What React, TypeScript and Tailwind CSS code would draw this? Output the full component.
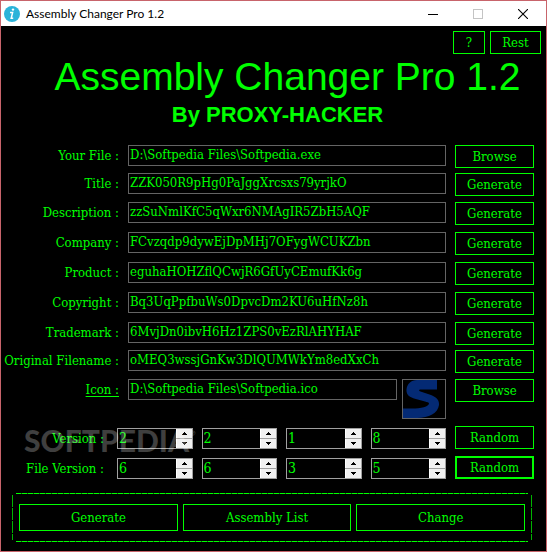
import React, { useState } from "react";

interface FieldRow {
  id: string;
  label: string;
  value: string;
  action: string;
  spacing: string;
}

const rows: FieldRow[] = [
  { id: "file", label: "Your File :", value: "D:\\Softpedia Files\\Softpedia.exe", action: "Browse", spacing: "" },
  { id: "title", label: "Title :", value: "ZZK050R9pHg0PaJggXrcsxs79yrjkO", action: "Generate", spacing: "mt-[5px]" },
  { id: "description", label: "Description :", value: "zzSuNmlKfC5qWxr6NMAgIR5ZbH5AQF", action: "Generate", spacing: "mt-[6px]" },
  { id: "company", label: "Company :", value: "FCvzqdp9dywEjDpMHj7OFygWCUKZbn", action: "Generate", spacing: "mt-[7px]" },
  { id: "product", label: "Product :", value: "eguhaHOHZflQCwjR6GfUyCEmufKk6g", action: "Generate", spacing: "mt-[7px]" },
  { id: "copyright", label: "Copyright :", value: "Bq3UqPpfbuWs0DpvcDm2KU6uHfNz8h", action: "Generate", spacing: "mt-[7px]" },
  { id: "trademark", label: "Trademark :", value: "6MvjDn0ibvH6Hz1ZPS0vEzRlAHYHAF", action: "Generate", spacing: "mt-[7px]" },
  { id: "original", label: "Original Filename :", value: "oMEQ3wssjGnKw3DlQUMWkYm8edXxCh", action: "Generate", spacing: "mt-[5px]" },
];

interface ButtonProps {
  children: React.ReactNode;
  className: string;
}

const GreenButton: React.FC<ButtonProps> = ({ children, className }) => (
  <button
    type="button"
    className={`flex items-center justify-center border-[#00ff00] bg-black hover:bg-[#003300] ${className}`}
  >
    {children}
  </button>
);

interface SpinnerProps {
  label: string;
  initial: number;
}

const Spinner: React.FC<SpinnerProps> = ({ label, initial }) => {
  const [value, setValue] = useState(initial);

  return (
    <div className="flex h-[21px] min-w-0 flex-1 border border-[#a0a0a0]">
      <input
        aria-label={label}
        value={value}
        onChange={(e) => setValue(Number(e.target.value) || 0)}
        className="h-[17px] w-full min-w-0 flex-1 bg-transparent pl-px text-sm leading-4 outline-none"
      />
      <div className="flex w-4 flex-none flex-col gap-px bg-[#a0a0a0]">
        <button
          type="button"
          aria-label={`${label} up`}
          onClick={() => setValue(value + 1)}
          className="flex flex-1 items-center justify-center border-l border-white bg-[#f0f0f0]"
        >
          <svg width="5" height="3" viewBox="0 0 5 3" shapeRendering="crispEdges">
            <path d="M2 0h1v1h1v1h1v1H0V2h1V1h1z" fill="#000" />
          </svg>
        </button>
        <button
          type="button"
          aria-label={`${label} down`}
          onClick={() => setValue(Math.max(0, value - 1))}
          className="flex flex-1 items-center justify-center border-l border-white bg-[#f0f0f0]"
        >
          <svg width="5" height="3" viewBox="0 0 5 3" shapeRendering="crispEdges">
            <path d="M0 0h5v1H4v1H3v1H2V2H1V1H0z" fill="#000" />
          </svg>
        </button>
      </div>
    </div>
  );
};

const App: React.FC = () => {
  return (
    <div className="flex min-h-screen flex-col border border-[#c8646b] bg-black font-['DejaVu_Serif_Condensed','DejaVu_Serif',serif] text-[13px] leading-4 text-[#00ff00]">
      {/* Title bar */}
      <header className="flex h-[25px] items-center bg-white pl-[3px] font-['Lato',sans-serif] text-xs text-black">
        <svg width="16" height="16" viewBox="0 0 16 16">
          <circle cx="8" cy="8" r="8" fill="#2bb3d9" />
          <circle cx="9" cy="3.6" r="1.2" fill="#fff" />
          <path d="M6 6.6h2.6L7.2 12.3h2" fill="none" stroke="#fff" strokeWidth="1.5" />
        </svg>
        <span className="ml-[6px] flex-1">Assembly Changer Pro 1.2</span>
        <button type="button" aria-label="Minimize" className="flex h-full w-[45px] items-center justify-center">
          <svg width="10" height="10" viewBox="0 0 10 10" shapeRendering="crispEdges">
            <path d="M0 5h10v1H0z" fill="#000" />
          </svg>
        </button>
        <button type="button" aria-label="Maximize" disabled className="flex h-full w-[45px] items-center justify-center">
          <svg width="10" height="10" viewBox="0 0 10 10" shapeRendering="crispEdges">
            <rect x="0.5" y="0.5" width="9" height="9" fill="none" stroke="#c4c4c4" />
          </svg>
        </button>
        <button type="button" aria-label="Close" className="flex h-full w-[46px] items-center justify-center">
          <svg width="10" height="10" viewBox="0 0 10 10">
            <path d="M0 0l10 10M10 0L0 10" stroke="#000" strokeWidth="1.1" />
          </svg>
        </button>
      </header>

      {/* Help and reset */}
      <div className="flex justify-end gap-[5px] pt-[5px] pr-[5px]">
        <GreenButton className="h-[23px] w-8 border">?</GreenButton>
        <GreenButton className="h-[23px] w-[51px] border">Rest</GreenButton>
      </div>

      {/* Heading */}
      <div className="pl-[28px] text-center font-['Liberation_Sans',sans-serif]">
        <h1 className="text-[39px] leading-[46px]">Assembly Changer Pro 1.2</h1>
      </div>
      <p className="pl-[8px] text-center font-['Liberation_Sans',sans-serif] text-[22px] leading-[30px] font-bold">
        By PROXY-HACKER
      </p>

      <form className="flex flex-col pt-[15px]">
        {rows.map((row) => (
          <div key={row.id} className={`flex items-start gap-[9px] pr-3 ${row.spacing}`}>
            <label htmlFor={row.id} className="w-[118px] flex-none text-right leading-[21px] whitespace-nowrap">
              {row.label}
            </label>
            <input
              id={row.id}
              defaultValue={row.value}
              className="h-[21px] min-w-0 flex-1 border border-[#646464] bg-black px-px pb-[2px] outline-none"
            />
            <GreenButton className="h-[23px] w-[79px] border">{row.action}</GreenButton>
          </div>
        ))}

        {/* Icon row */}
        <div className="mt-[6px] flex items-start gap-[9px] pr-3">
          <label htmlFor="icon" className="w-[118px] flex-none text-right leading-[21px] underline underline-offset-2">
            Icon :
          </label>
          <div className="flex min-w-0 flex-1 gap-[5px]">
            <input
              id="icon"
              defaultValue={"D:\\Softpedia Files\\Softpedia.ico"}
              className="h-[21px] min-w-0 flex-1 border border-[#646464] bg-black px-px pb-[2px] outline-none"
            />
            <div className="h-[40px] w-[44px] flex-none border border-[#646464]">
              <svg className="h-full w-full" viewBox="0 0 42 38" preserveAspectRatio="none">
                <path
                  d="M34 0V9.5H18C15.5 9.5 15.5 10.5 17.5 11.5L28 15C34 17.500 36.500 20.500 36 25C35 33 26 38 14 38H0V28.500H9C18 28.500 26 26.500 26 23.500C26 22.500 24 22 22 21.500L11 18.500C6 17 3 14 3.500 9.500C4 4 8 0 14 0z"
                  fill="#042a74"
                />
              </svg>
            </div>
          </div>
          <GreenButton className="h-[23px] w-[79px] border">Browse</GreenButton>
        </div>

        {/* Versions */}
        <div className="relative mt-[7px] flex flex-col gap-[7px] pr-3">
          <div className="flex items-end gap-[9px]">
            <span className="w-[107px] flex-none pr-1 text-right leading-[21px]">Version :</span>
            <Spinner label="Version major" initial={2} />
            <Spinner label="Version minor" initial={2} />
            <Spinner label="Version build" initial={1} />
            <Spinner label="Version revision" initial={8} />
            <GreenButton className="h-[23px] w-[79px] border">Random</GreenButton>
          </div>
          <div className="flex items-end gap-[9px]">
            <span className="w-[107px] flex-none pr-1 text-right leading-[21px]">File Version :</span>
            <Spinner label="File version major" initial={6} />
            <Spinner label="File version minor" initial={6} />
            <Spinner label="File version build" initial={3} />
            <Spinner label="File version revision" initial={5} />
            <GreenButton className="h-[23px] w-[79px] border-2">Random</GreenButton>
          </div>
          <span className="pointer-events-none absolute top-0 left-[23px] font-['Lato',sans-serif] text-[30px] leading-7 font-black text-white/25">
            SOFTPEDIA<sup className="-top-4 text-[8px]">®</sup>
          </span>
        </div>

        {/* Bottom actions */}
        <div className="mt-[14px] mr-[14px] ml-[11px] flex">
          <div className="my-[2px] w-px bg-[repeating-linear-gradient(to_bottom,#00b400_0_12px,transparent_12px_13px)]" />
          <div className="mx-[3px] flex flex-1 flex-col gap-[10px]">
            <div className="h-px bg-[repeating-linear-gradient(to_right,#00ff00_0_5px,#007800_5px_6px)]" />
            <div className="flex gap-[5px] px-[3px]">
              <GreenButton className="h-[27px] flex-16 border">Generate</GreenButton>
              <GreenButton className="h-[27px] flex-17 border">Assembly List</GreenButton>
              <GreenButton className="h-[27px] flex-17 border">Change</GreenButton>
            </div>
            <div className="h-px bg-[repeating-linear-gradient(to_right,#00ff00_0_5px,#007800_5px_6px)]" />
          </div>
          <div className="my-[2px] w-px bg-[repeating-linear-gradient(to_bottom,#00b400_0_12px,transparent_12px_13px)]" />
        </div>
      </form>
    </div>
  );
};

export default App;
